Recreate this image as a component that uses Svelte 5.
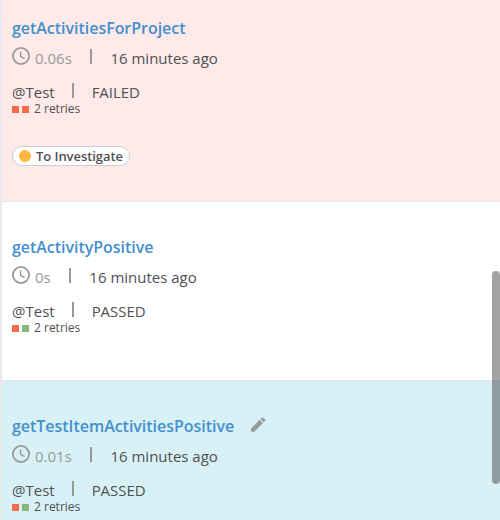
<script>
  const items = [
    { name: 'getActivitiesForProject', time: '0.06s', status: 'FAILED', kind: 'failed', retries: ['bad', 'bad'], defect: 'To Investigate' },
    { name: 'getActivityPositive', time: '0s', status: 'PASSED', kind: 'passed', retries: ['bad', 'good'] },
    { name: 'getTestItemActivitiesPositive', time: '0.01s', status: 'PASSED', kind: 'selected', retries: ['bad', 'good'], editable: true }
  ];
</script>

<main class="list">
  {#each items as item}
    <section class="item {item.kind}">
      <div class="title">
        <span class="name">{item.name}</span>
        {#if item.editable}
          <svg class="pencil" width="16" height="16" viewBox="0 0 16 16">
            <path d="M1 11.4 9.6 2.8 12.9 6.1 4.3 14.7H1z M10.5 1.9 11.7.7Q12.4.1 13.1.7L15 2.6Q15.6 3.3 15 4L13.8 5.2z" />
          </svg>
        {/if}
      </div>
      <div class="meta">
        <svg class="clock" width="18" height="18" viewBox="0 0 18 18">
          <circle cx="9" cy="9" r="8.1" />
          <path d="M8.6 4.4V9.3L12.6 11.7" />
        </svg>
        <span class="time">{item.time}</span>
        <i class="bar"></i>
        <span class="ago">16 minutes ago</span>
      </div>
      <div class="result">
        <span class="method">@Test</span>
        <i class="bar"></i>
        <span class="status">{item.status}</span>
      </div>
      <div class="retries">
        {#each item.retries as retry}
          <i class="square {retry}"></i>
        {/each}
        <span>2 retries</span>
      </div>
      {#if item.defect}
        <div class="tag"><i class="dot"></i><span>{item.defect}</span></div>
      {/if}
    </section>
  {/each}
  <div class="thumb"></div>
</main>

<style>
  .list {
    position: relative;
    box-sizing: border-box;
    height: 520px;
    overflow: hidden;
    border-left: 2px solid #e9e9ec;
    background: #fff;
    color: #505052;
    font-family: 'Open Sans', sans-serif;
    font-size: 15px;
  }
  .item {
    box-sizing: border-box;
    height: 179px;
    padding: 34px 10px 0;
    border-bottom: 1px solid #e6e6e8;
    white-space: nowrap;
  }
  .failed {
    height: 202px;
    padding-top: 17px;
    background: #feebe9;
  }
  .selected {
    background: #d7f1f6;
  }
  .title {
    display: flex;
    align-items: center;
    height: 22px;
    line-height: 22px;
    font-size: 16px;
    font-weight: 600;
    letter-spacing: -0.03px;
    color: #448fcd;
  }
  .pencil {
    margin: -2px 0 0 16px;
    fill: #999;
  }
  .meta {
    display: flex;
    align-items: center;
    height: 22px;
    margin-top: 8px;
    line-height: 22px;
  }
  .clock {
    margin: -4px 5px 0 0;
    fill: none;
    stroke: #999;
    stroke-width: 1.8;
  }
  .clock path {
    stroke-width: 1.4;
  }
  .time {
    color: #999;
  }
  .bar {
    width: 2px;
    height: 15px;
    margin: -3px 18px 0;
    background: #999;
  }
  .ago {
    margin-left: 0.6px;
  }
  .result {
    display: flex;
    align-items: center;
    height: 20px;
    margin-top: 13px;
    line-height: 20px;
  }
  .result .bar {
    margin-left: 17px;
  }
  .status {
    letter-spacing: -0.05px;
  }
  .retries {
    display: flex;
    align-items: center;
    gap: 3px;
    height: 14px;
    line-height: 14px;
    font-size: 12px;
  }
  .retries span {
    margin-left: 2px;
  }
  .square {
    width: 7px;
    height: 7px;
    margin-top: 1px;
  }
  .bad {
    background: #f36c4a;
  }
  .good {
    background: #87b77b;
  }
  .tag {
    display: flex;
    align-items: center;
    box-sizing: border-box;
    width: 118px;
    height: 20px;
    margin-top: 30px;
    padding-left: 6px;
    border: 1px solid #ccc;
    border-radius: 10px;
    background: #fff;
    font-size: 13px;
    line-height: 18px;
    font-weight: 600;
    letter-spacing: -0.06px;
  }
  .dot {
    width: 12px;
    height: 12px;
    margin-right: 5px;
    border-radius: 50%;
    background: #ffb743;
  }
  .thumb {
    position: absolute;
    top: 271px;
    right: 0;
    width: 8px;
    height: 213px;
    border-radius: 4px;
    background: rgba(72, 72, 72, 0.5);
  }
</style>
